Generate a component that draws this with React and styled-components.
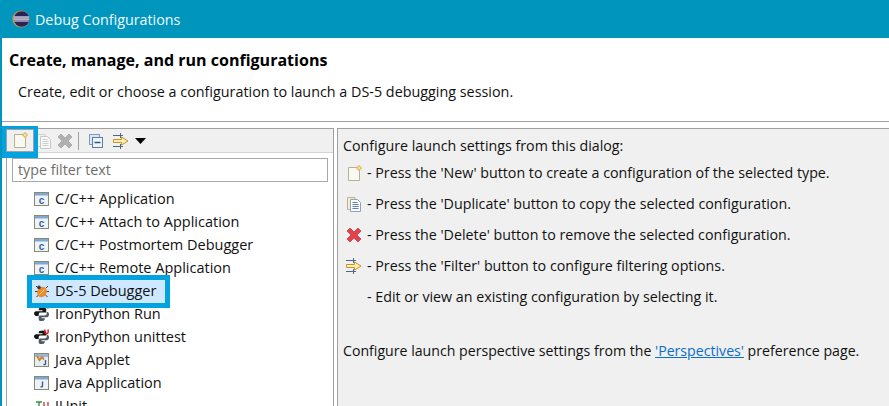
import React from 'react';
import styled, { createGlobalStyle } from 'styled-components';

const GlobalStyle = createGlobalStyle`
  html, body {
    margin: 0;
    padding: 0;
    background: #fff;
  }
  body {
    font-family: "Open Sans", "Noto Sans", sans-serif;
    font-size: 14.25px;
    color: #111;
  }
`;

const Window = styled.div`
  width: 889px;
  height: 406px;
  overflow: hidden;
  display: flex;
  flex-direction: column;
  box-sizing: border-box;
  border-left: 2px solid #0095bd;
`;

const TitleBar = styled.div`
  height: 38px;
  flex: none;
  margin-left: -2px;
  background: #0095bd;
  display: flex;
  align-items: center;
  gap: 5px;
  padding-left: 12px;
  color: #f2fafc;
  font-size: 14.3px;
`;

const Banner = styled.div`
  height: 83px;
  flex: none;
  background: #fff;
  border-bottom: 1px solid #a0a0a0;
`;

const BannerTitle = styled.div`
  font-weight: 700;
  font-size: 16.05px;
  padding: 12px 0 0 7px;
  line-height: 20px;
  color: #000;
`;

const BannerText = styled.div`
  padding: 11px 0 0 16px;
  line-height: 22px;
  font-size: 14.35px;
`;

const Body = styled.div`
  flex: 1;
  display: flex;
  gap: 3px;
  padding: 6px 0 0 4px;
  background: #fff;
  min-height: 0;
`;

const LeftPane = styled.div`
  width: 328px;
  flex: none;
  border: 1px solid #a0a0a0;
  border-bottom: none;
  box-sizing: border-box;
  display: flex;
  flex-direction: column;
`;

const Toolbar = styled.div`
  height: 24px;
  flex: none;
  box-sizing: border-box;
  display: flex;
  align-items: center;
  background: #f0f0f0;
  border-bottom: 1px solid #d4d4d4;
`;

const ToolButton = styled.div`
  width: 20px;
  height: 23px;
  margin-left: ${(p) => p.$gap || 0}px;
  display: flex;
  align-items: center;
  justify-content: center;
  flex: none;
`;

const ActiveToolButton = styled(ToolButton)`
  width: 28px;
  height: 23px;
  margin: -1px 0 0 -1px;
  box-sizing: border-box;
  border: 1px solid #a0a0a0;
  background: #f0f0f0;
  position: relative;

  &::before {
    content: '';
    position: absolute;
    box-sizing: border-box;
    left: -7px;
    top: -4px;
    right: -5px;
    bottom: -7px;
    border: solid #00a2e0;
    border-width: 3px 4px 6px 6px;
  }
`;

const ToolSeparator = styled.div`
  width: 1px;
  height: 18px;
  background: #a0a0a0;
  margin: 0 7px 0 3px;
  flex: none;
`;

const DropArrow = styled.svg`
  width: 11px;
  height: 6px;
  margin-left: 4px;
  flex: none;
`;

const FilterInput = styled.div`
  margin: 5px 0 0 5px;
  width: 316px;
  height: 24px;
  box-sizing: border-box;
  border: 1px solid #a8a8a8;
  padding-left: 5px;
  color: #6d6d6d;
  line-height: 22px;
  flex: none;
`;

const Tree = styled.div`
  display: flex;
  flex-direction: column;
  margin-top: 6px;
  padding-left: 25px;
  font-size: 14.5px;
`;

const TreeRow = styled.div`
  height: 23px;
  flex: none;
  box-sizing: border-box;
  display: flex;
  align-items: center;
  gap: 5px;
  padding: 0 0 2px 2px;
  white-space: nowrap;
  ${(p) => p.$selected && `
    background: #cde8ff;
    width: 133px;
    outline: 5px solid #00a2e0;
    position: relative;
  `}
`;

const TreeIcon = styled.span`
  width: 16px;
  height: 16px;
  flex: none;
  display: flex;
`;

const RightPane = styled.div`
  flex: 1;
  border-top: 1px solid #a0a0a0;
  border-left: 1px solid #a0a0a0;
  box-sizing: border-box;
  background: #f0f0f0;
  padding: 7px 0 0 5px;
`;

const Intro = styled.div`
  line-height: 20px;
  margin-bottom: 1px;
`;

const HelpList = styled.div`
  display: flex;
  flex-direction: column;
`;

const HelpRow = styled.div`
  height: 31px;
  display: flex;
  align-items: center;
  white-space: nowrap;
`;

const HelpIcon = styled.div`
  width: 16px;
  height: 16px;
  margin: 0 5px 0 3px;
  flex: none;
  display: flex;
  align-items: center;
  justify-content: center;
`;

const Footer = styled.div`
  margin-top: 29px;
  line-height: 20px;
  white-space: nowrap;
  font-size: 14.15px;
`;

const PrefLink = styled.span`
  color: #0a6ecb;
  text-decoration: underline;
`;

const EclipseIcon = () => (
  <svg width="18" height="18" viewBox="0 0 18 18">
    <circle cx="9" cy="9" r="8.6" fill="#c79a4a" />
    <circle cx="9.6" cy="9" r="7.8" fill="#2c2255" />
    <rect x="2" y="6.4" width="15" height="1.3" fill="#e9e6f4" />
    <rect x="1.8" y="8.4" width="15.4" height="1.3" fill="#f4f2fb" />
    <rect x="2.2" y="10.4" width="14.6" height="1.2" fill="#d8d4ea" />
  </svg>
);

const NewIcon = () => (
  <svg width="16" height="16" viewBox="0 0 16 16">
    <path d="M2.5 2.5H13.5V15.5H2.5Z" fill="#f8f9f2" stroke="#b8b090" />
    <path d="M13 .5V5.5M10.5 3H15.5" stroke="#d9b04a" strokeWidth="2.4" />
    <path d="M13 1.5V4.5M11.5 3H14.5" stroke="#fdf0b0" strokeWidth="1" />
  </svg>
);

const DuplicateIcon = ({ muted }) => (
  <svg width="16" height="16" viewBox="0 0 16 16">
    <path d="M1.5 1.5H9V13.5H1.5Z" fill={muted ? '#f2f2f2' : '#f4ecd4'} stroke={muted ? '#d0d0d0' : '#c4b184'} />
    <path d="M4.5 3.5H11.5L14.5 6.5V15.5H4.5Z" fill={muted ? '#f8f8f8' : '#fafcff'} stroke={muted ? '#c8c8c8' : '#8fa2bd'} />
    <path d="M6.5 6.5H11.5M6.5 8.5H12.5M6.5 10.5H12.5M6.5 12.5H12.5" stroke={muted ? '#cfcfcf' : '#5f7fb5'} />
  </svg>
);

const DeleteIcon = ({ muted }) => (
  <svg width="16" height="16" viewBox="0 0 16 16">
    <path d="M1 4L4 1L8 5L12 1L15 4L11 8L15 12L12 15L8 11L4 15L1 12L5 8Z" fill={muted ? '#b0b0b0' : '#e2434b'} stroke={muted ? '#a4a4a4' : '#cf3a44'} strokeWidth=".8" strokeLinejoin="round" />
  </svg>
);

const CollapseIcon = () => (
  <svg width="16" height="16" viewBox="0 0 16 16">
    <rect x="1.5" y="1.5" width="10" height="10" fill="#dbe7f5" stroke="#7e9cc0" />
    <rect x="4.5" y="4.5" width="10" height="10" fill="#eef4fb" stroke="#5b7da6" />
    <path d="M6.5 9.5H12.5" stroke="#24507f" strokeWidth="1.4" />
  </svg>
);

const FilterIcon = () => (
  <svg width="16" height="16" viewBox="0 0 16 16">
    <path d="M0 2.5H10M0 13.5H10M7.5 0V5M7.5 11V16" stroke="#4d6788" />
    <path d="M.5 6.5H8.5V4L15 8L8.5 12V9.5H.5Z" fill="#fff0b0" stroke="#c8922e" />
  </svg>
);

const CFileIcon = () => (
  <svg width="16" height="16" viewBox="0 0 16 16">
    <rect x=".5" y="1.5" width="14" height="13" fill="#eef3fa" stroke="#8a8a70" />
    <rect x="1" y="2" width="13" height="2.5" fill="#7fa8d6" />
    <text x="7.5" y="12.6" textAnchor="middle" fontSize="10" fontWeight="700" fontFamily="Liberation Sans, sans-serif" fill="#3a5f95">c</text>
  </svg>
);

const BugIcon = () => (
  <svg width="16" height="16" viewBox="0 0 16 16">
    <path d="M2 3L5 6M14 3L11 6M1 8.5H4M15 8.5H12M2.5 14L5 11.5M13.5 14L11 11.5" stroke="#3a3a3a" />
    <ellipse cx="8" cy="9" rx="4.6" ry="5.4" fill="#ee8c2c" transform="rotate(35 8 9)" />
    <path d="M5.5 11.5L10.5 6.5" stroke="#fbd9a8" />
    <circle cx="5" cy="4.4" r="1.8" fill="#3a3a3a" />
  </svg>
);

const PythonIcon = ({ badge }) => (
  <svg width="17" height="16" viewBox="0 0 17 16">
    <path d="M5 3Q5 1 9 1T13 3V6.5H7Q5 6.5 5 8V10H2Q0 9.5 0 7.5T2 5H9V4H5Z" fill="#151515" />
    <path d="M13.5 6H14.5Q16 6.5 16 8.5T14 11.5H8V12.5H11.5V13.5Q11 15.5 8 15.5T5 13.5V11Q5 9.5 7 9.5H11Q13.5 9.5 13.5 8Z" fill="#4a5a66" />
    {badge && <path d="M11.5 0V3Q11.5 4.6 13.2 4.6T15 3V0" fill="none" stroke="#e01010" strokeWidth="1.5" />}
    {!badge && <path d="M14 1.5H16" stroke="#333" strokeWidth="1" />}
  </svg>
);

const AppletIcon = () => (
  <svg width="16" height="16" viewBox="0 0 16 16">
    <rect x=".5" y="1.5" width="14" height="13" fill="#e6ecf5" stroke="#8a8a70" />
    <rect x="1" y="2" width="13" height="3" fill="#9ab6d8" />
    <path d="M3 4L5.5 8L8 5L10 7.5" fill="none" stroke="#c8892a" strokeWidth="2" />
    <path d="M11.5 8V12Q11.5 13 9.5 12.5" fill="none" stroke="#35598c" strokeWidth="1.3" />
  </svg>
);

const JavaAppIcon = () => (
  <svg width="16" height="16" viewBox="0 0 16 16">
    <rect x=".5" y="1.5" width="14" height="13" fill="#eef3fa" stroke="#8a8a70" />
    <rect x="1" y="2" width="13" height="2.5" fill="#7fa8d6" />
    <path d="M8.5 6.5V11Q8.5 12.3 6.5 11.6" fill="none" stroke="#35598c" strokeWidth="1.3" />
  </svg>
);

const JUnitIcon = () => (
  <svg width="16" height="16" viewBox="0 0 16 16">
    <path d="M2 4H8M5 4V13M3.5 13H6.5" stroke="#3a8a4a" strokeWidth="1.4" fill="none" />
    <path d="M10 4V9Q10 11 12 11T14 9V4" stroke="#d04040" strokeWidth="1.4" fill="none" />
  </svg>
);

const treeItems = [
  { label: 'C/C++ Application', icon: <CFileIcon /> },
  { label: 'C/C++ Attach to Application', icon: <CFileIcon /> },
  { label: 'C/C++ Postmortem Debugger', icon: <CFileIcon /> },
  { label: 'C/C++ Remote Application', icon: <CFileIcon /> },
  { label: 'DS-5 Debugger', icon: <BugIcon />, selected: true },
  { label: 'IronPython Run', icon: <PythonIcon /> },
  { label: 'IronPython unittest', icon: <PythonIcon badge /> },
  { label: 'Java Applet', icon: <AppletIcon /> },
  { label: 'Java Application', icon: <JavaAppIcon /> },
  { label: 'JUnit', icon: <JUnitIcon /> },
];

const helpItems = [
  { text: "- Press the 'New' button to create a configuration of the selected type.", icon: <NewIcon /> },
  { text: "- Press the 'Duplicate' button to copy the selected configuration.", icon: <DuplicateIcon /> },
  { text: "- Press the 'Delete' button to remove the selected configuration.", icon: <DeleteIcon /> },
  { text: "- Press the 'Filter' button to configure filtering options.", icon: <FilterIcon /> },
  { text: '- Edit or view an existing configuration by selecting it.' },
];

const App = () => (
  <>
    <GlobalStyle />
    <Window>
      <TitleBar>
        <EclipseIcon />
        Debug Configurations
      </TitleBar>
      <Banner>
        <BannerTitle>Create, manage, and run configurations</BannerTitle>
        <BannerText>Create, edit or choose a configuration to launch a DS-5 debugging session.</BannerText>
      </Banner>
      <Body>
        <LeftPane>
          <Toolbar>
            <ActiveToolButton><NewIcon /></ActiveToolButton>
            <ToolButton><DuplicateIcon muted /></ToolButton>
            <ToolButton $gap={1}><DeleteIcon muted /></ToolButton>
            <ToolSeparator />
            <ToolButton><CollapseIcon /></ToolButton>
            <ToolButton $gap={5}><FilterIcon /></ToolButton>
            <DropArrow viewBox="0 0 11 6"><path d="M0 0H11L5.5 6Z" fill="#000" /></DropArrow>
          </Toolbar>
          <FilterInput>type filter text</FilterInput>
          <Tree>
            {treeItems.map((item) => (
              <TreeRow key={item.label} $selected={item.selected}>
                <TreeIcon>{item.icon}</TreeIcon>
                {item.label}
              </TreeRow>
            ))}
          </Tree>
        </LeftPane>
        <RightPane>
          <Intro>Configure launch settings from this dialog:</Intro>
          <HelpList>
            {helpItems.map((item) => (
              <HelpRow key={item.text}>
                <HelpIcon>{item.icon}</HelpIcon>
                {item.text}
              </HelpRow>
            ))}
          </HelpList>
          <Footer>
            Configure launch perspective settings from the <PrefLink>'Perspectives'</PrefLink> preference page.
          </Footer>
        </RightPane>
      </Body>
    </Window>
  </>
);

export default App;
